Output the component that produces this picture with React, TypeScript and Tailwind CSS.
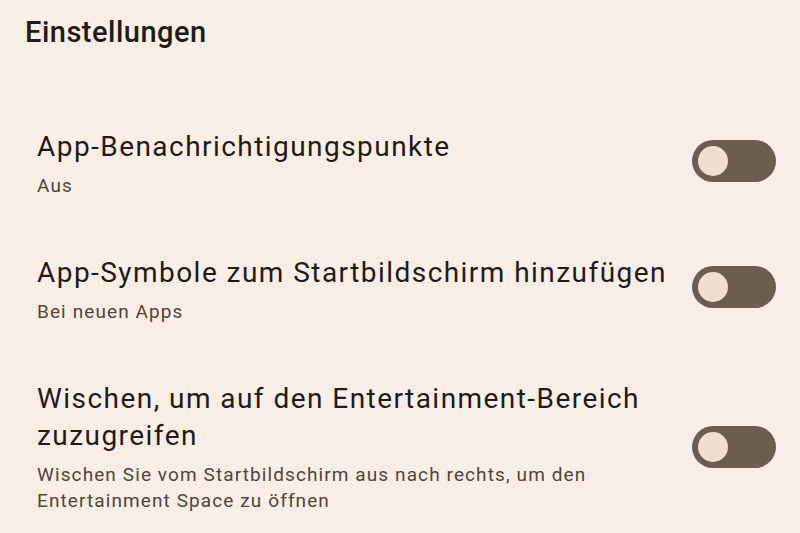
function Toggle({ raised }: { raised: boolean }) {
  return (
    <div
      className={`flex h-[42px] w-[84px] shrink-0 items-center rounded-full bg-[#6b5e51] px-[6px] ${raised ? "-mt-[5px]" : ""}`}
    >
      <div className="h-[30px] w-[30px] rounded-full bg-[#f0dfd0]" />
    </div>
  );
}

type Item = { title: string; summary: string };

const items: Item[] = [
  { title: "App-Benachrichtigungspunkte", summary: "Aus" },
  { title: "App-Symbole zum Startbildschirm hinzufügen", summary: "Bei neuen Apps" },
  {
    title: "Wischen, um auf den Entertainment-Bereich zuzugreifen",
    summary: "Wischen Sie vom Startbildschirm aus nach rechts, um den Entertainment Space zu öffnen",
  },
];

export default function App() {
  return (
    <div className="h-[533px] w-[800px] overflow-hidden bg-[#f9eee6] font-['Roboto',sans-serif] text-[#1f1b17]">
      <h1 className="pl-[25px] pt-[14px] text-[29px] font-medium leading-[36px] tracking-[0.5px]">Einstellungen</h1>
      <div className="mt-[78px] flex flex-col gap-[55px]">
        {items.map((item, i) => (
          <div key={item.title} className="flex items-center pl-[37px] pr-[24px]">
            <div className="w-[642px] shrink-0">
              <p className="text-[28px] leading-[37px] tracking-[1.45px]">{item.title}</p>
              <p className="mt-[8px] text-[19px] leading-[26px] tracking-[1.1px] text-[#51453a]">{item.summary}</p>
            </div>
            <div className="flex flex-1 justify-end">
              <Toggle raised={i < 2} />
            </div>
          </div>
        ))}
      </div>
    </div>
  );
}
